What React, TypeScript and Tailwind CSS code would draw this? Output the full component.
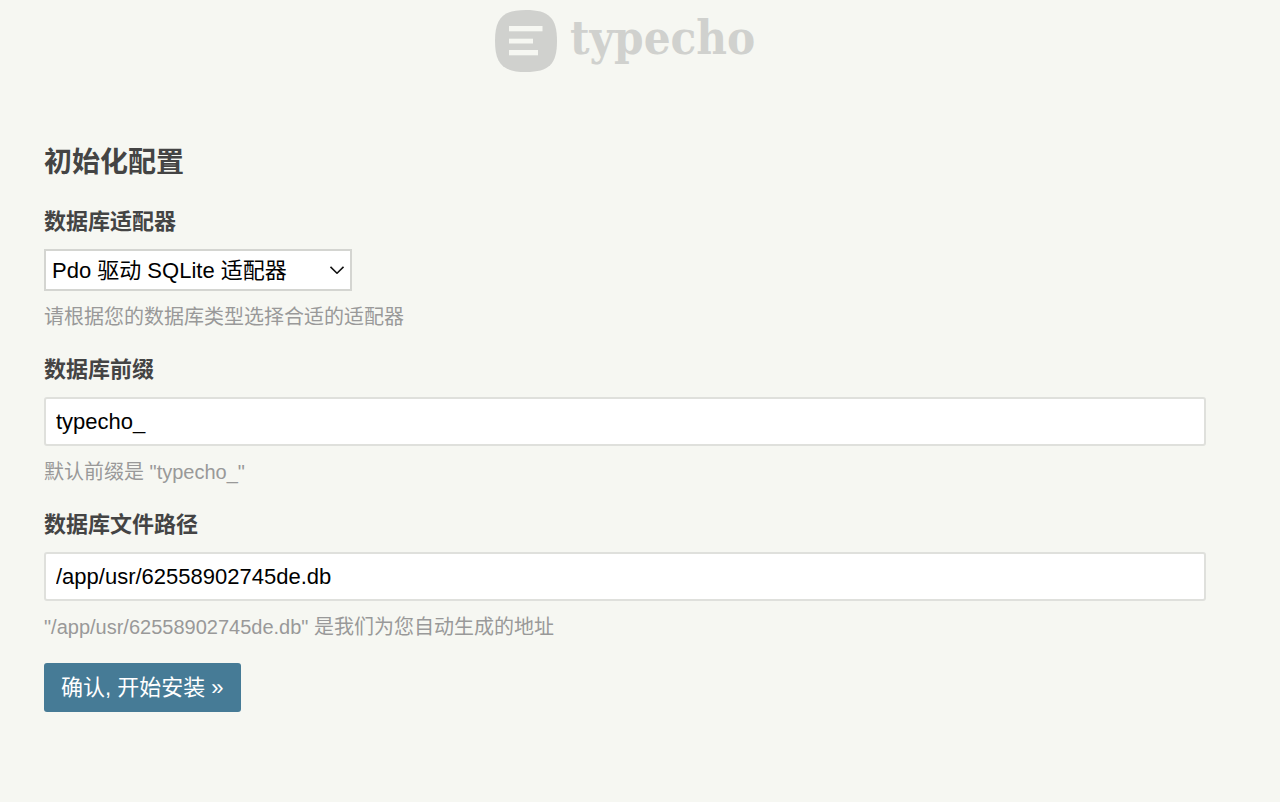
import type { ReactNode } from 'react';

function Logo() {
  return (
    <svg
      role="img"
      aria-label="typecho"
      viewBox="0 0 260 62"
      className="h-[62px] w-[260px] overflow-visible"
      fill="#d0d1ce"
    >
      <path d="M31 0C54 0 62 8 62 31S54 62 31 62 0 54 0 31 8 0 31 0Z" />
      <g fill="#f6f7f2">
        <rect x="14" y="16" width="33.5" height="5.3" />
        <rect x="14" y="28.7" width="24" height="4.8" />
        <rect x="14" y="40" width="29" height="5.3" />
      </g>
      <text
        x="75"
        y="44"
        fontFamily='"DejaVu Serif Condensed", "DejaVu Serif", serif'
        fontSize="47"
        fontWeight="bold"
      >
        typecho
      </text>
    </svg>
  );
}

type FieldProps = {
  id: string;
  label: string;
  description: string;
  children: ReactNode;
};

function Field({ id, label, description, children }: FieldProps) {
  return (
    <div className="flex w-full flex-col items-start">
      <label htmlFor={id} className="mb-[10px] text-[22px] leading-[34px] font-bold">
        {label}
      </label>
      {children}
      <p className="mt-[11px] text-[20px] leading-[30px] text-[#999]">{description}</p>
    </div>
  );
}

const inputClass =
  'h-[49px] w-full rounded-[3px] border-2 border-[#dfe0dc] bg-white px-[10px] text-[22px] text-black';

export default function App() {
  return (
    <div className='min-h-screen bg-[#f6f7f2] pt-[10px] pr-[74px] pb-12 pl-11 font-["Liberation_Sans","Noto_Sans_CJK_SC",sans-serif] text-[#444]'>
      <header className="flex justify-center">
        <Logo />
      </header>

      <main className="mt-[70px]">
        <form className="flex flex-col items-start gap-[21px]">
          <h1 className="text-[28px] leading-[42px] font-bold">初始化配置</h1>

          <Field id="dbAdapter" label="数据库适配器" description="请根据您的数据库类型选择合适的适配器">
            <div className="relative">
              <select
                id="dbAdapter"
                name="dbAdapter"
                className="h-[42px] w-[308px] appearance-none border-2 border-[#d4d5d1] bg-white pr-9 pl-[6px] text-[22px] text-black"
              >
                <option>Pdo 驱动 SQLite 适配器</option>
              </select>
              <svg
                viewBox="0 0 14 8"
                className="pointer-events-none absolute top-[17px] right-2 h-2 w-[14px]"
                fill="none"
                stroke="#111"
                strokeWidth="1.6"
              >
                <path d="M.5 .8L7 7.2 13.5 .8" />
              </svg>
            </div>
          </Field>

          <Field id="dbPrefix" label="数据库前缀" description={'默认前缀是 "typecho_"'}>
            <input type="text" id="dbPrefix" name="dbPrefix" defaultValue="typecho_" className={inputClass} />
          </Field>

          <Field
            id="dbFile"
            label="数据库文件路径"
            description={'"/app/usr/62558902745de.db" 是我们为您自动生成的地址'}
          >
            <input
              type="text"
              id="dbFile"
              name="dbFile"
              defaultValue="/app/usr/62558902745de.db"
              className={inputClass}
            />
          </Field>

          <button type="submit" className="h-[49px] rounded-[3px] bg-[#467b96] px-[17px] text-[22px] text-white">
            确认, 开始安装 »
          </button>
        </form>
      </main>
    </div>
  );
}
